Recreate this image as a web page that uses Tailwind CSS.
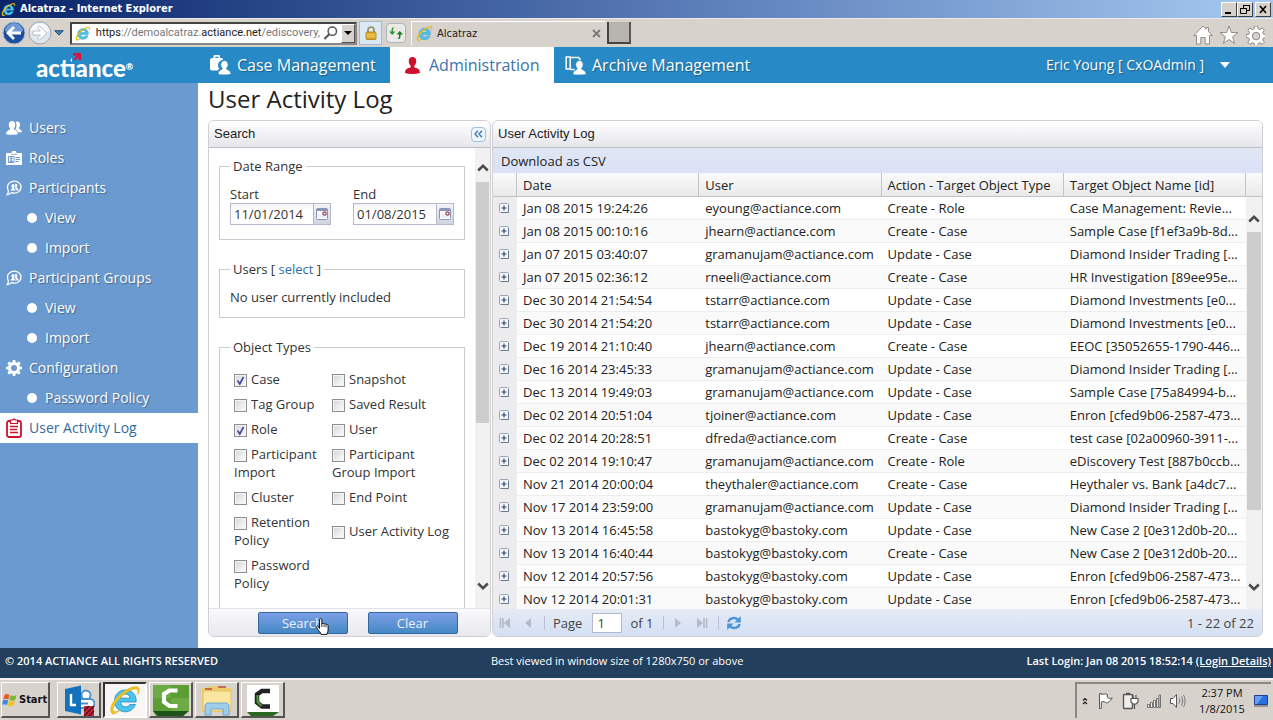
<!DOCTYPE html>
<html lang="en">
<head>
  <meta charset="UTF-8" />
  <meta name="viewport" content="width=device-width, initial-scale=1.0" />
  <title>Alcatraz - User Activity Log</title>
  <script src="https://cdn.jsdelivr.net/npm/@tailwindcss/browser@4"></script>
</head>
<body class="h-screen overflow-hidden flex flex-col bg-white text-[#333] text-[13px] leading-[18px] font-['Open_Sans',sans-serif]">

  <!-- shared icons -->
  <svg class="hidden">
    <symbol id="ie" viewBox="0 0 32 32">
      <path d="M27 18H11.500c.3 3 2.300 4.800 5 4.800 2 0 3.500-.8 4.400-2.300h5.500c-1.600 4.500-5.300 7.300-10 7.300C10 27.800 5.500 23.300 5.500 17S10 6 16.400 6 27.200 10.600 27.200 16.500zM11.600 14.200h9.500c-.3-2.500-2.200-4.200-4.700-4.200s-4.400 1.700-4.800 4.200z" fill="#4cc3ee" stroke="#1b8fc6" stroke-width=".8" />
      <path d="M3 29.500C-.5 26 3 17 11 10.500 18.500 4 27 1 29.500 3.500c1.500 1.700.5 4.500-.8 7 .6-3 .5-4.800-.7-5.300-3-1.200-9.500 2-15.500 7.300C6 18.500 2.800 25 4.600 27c1.200 1.200 4 .4 7-1-3.800 3-7 5-8.600 3.500z" fill="#f2c51d" stroke="#c99a10" stroke-width=".4" />
    </symbol>
    <symbol id="person" viewBox="0 0 16 18">
      <path d="M8 0c2.500 0 4 1.700 4 4.300 0 2-.8 3.900-2 4.900-.2 1.300.1 1.900 1 2.300 2.600.8 4.400 1.300 4.700 3.500l.2 2c-2.500 1-5 1-8 1s-5.400 0-7.900-1l.2-2c.3-2.200 2.200-2.700 4.800-3.500.9-.4 1.200-1 1-2.300-1.200-1-2-2.900-2-4.900C4 1.700 5.500 0 8 0z" />
    </symbol>
    <symbol id="bubble" viewBox="0 0 16 16">
      <path d="M8.300 1.200c3.900 0 6.700 2.500 6.700 5.900s-2.800 6-6.700 6c-1 0-2-.2-2.800-.5-1 1-2.500 1.800-4.300 2 .9-1 1.200-2.300 1.200-3.500C1.700 10 1.500 8.600 1.500 7.100c0-3.400 2.900-5.900 6.800-5.900z" fill="none" stroke="#fff" stroke-width="1.300" />
      <path d="M4.500 10.500c0-1.500 1-1.700 1.800-2.100.2-.4-.8-1-.8-2.500 0-1.200.7-1.900 1.600-1.900s1.500.7 1.500 1.900c0 1.300-.7 1.900-.6 2.500.8.400 1.700.6 1.700 2.100zM9 4c1.900-.8 2.700.7 2.400 2.100-.2 1-.7 1.400-.6 2 1 .4 1.800.7 1.800 2.300h-2.200c0-1.200-.6-1.800-1.500-2.300C9.400 6.800 9.500 5 9 4z" fill="#fff" />
    </symbol>
    <symbol id="gear" viewBox="0 0 16 16">
      <path fill-rule="evenodd" d="M6.800 0h2.400l.4 2.200 1.400.6L12.900 1.500l1.700 1.700-1.300 1.900.6 1.400 2.100.3v2.400l-2.200.4-.5 1.400 1.300 1.900-1.700 1.700-1.900-1.300-1.400.6L9.200 16H6.800l-.4-2.200-1.400-.5-1.900 1.300-1.700-1.700L2.700 11l-.6-1.400L0 9.200V6.800l2.200-.3.500-1.400-1.300-1.900 1.700-1.700L5 2.800l1.400-.6zM8 5a3 3 0 100 6 3 3 0 000-6z" />
    </symbol>
    <symbol id="calendar" viewBox="0 0 14 14">
      <rect x="1.500" y="1.500" width="11" height="11" rx="1" fill="#fff" stroke="#8a93b8" />
      <path d="M1.500 3h11" stroke="#8a93b8" stroke-width="2" />
      <path d="M3 10h8M3 8h3" stroke="#dde1ee" />
      <circle cx="9.500" cy="6.500" r="1.700" fill="#fff" stroke="#8c3a52" stroke-width="1.200" />
    </symbol>
    <symbol id="plus" viewBox="0 0 10 10">
      <rect x=".5" y=".5" width="9" height="9" rx="1" fill="#f4f6fa" stroke="#9aa4b4" />
      <path d="M9.500 2v7.500H2" fill="none" stroke="#68788f" />
      <path d="M5 2.500v5M2.500 5h5" stroke="#2c4670" stroke-width="1.200" />
    </symbol>
    <symbol id="chev" viewBox="0 0 12 8">
      <path d="M1.200 6.500L6 1.800l4.800 4.700" fill="none" stroke="#4a4a4a" stroke-width="2.500" />
    </symbol>
  </svg>

  <!-- window title bar -->
  <div class="h-[18px] shrink-0 flex items-center gap-1 pl-px pr-0.5 bg-linear-to-r from-[#0a246a] via-[#6486c0] via-60% to-[#a6caf0] text-white">
    <svg class="size-[15px]"><use href="#ie" /></svg>
    <span class="flex-1 font-bold text-[11px] font-['DejaVu_Sans_Condensed','DejaVu_Sans',sans-serif]">Alcatraz - Internet Explorer</span>
    <button aria-label="Minimize" class="w-4 h-[15px] bg-[#d6d1cb] border border-t-white border-l-white border-r-[#404040] border-b-[#404040]">
      <svg viewBox="0 0 14 13" class="size-full"><path d="M3 10h6" stroke="#000" stroke-width="2" /></svg>
    </button>
    <button aria-label="Restore" class="-ml-1 w-4 h-[15px] bg-[#d6d1cb] border border-t-white border-l-white border-r-[#404040] border-b-[#404040]">
      <svg viewBox="0 0 14 13" class="size-full"><path d="M5.500 5V2.500h6v5H9M5 2.500h7M2.500 5.500h6v5h-6zM2 5.500h7" fill="none" stroke="#000" /></svg>
    </button>
    <button aria-label="Close" class="-ml-0.5 w-4 h-[15px] bg-[#d6d1cb] border border-t-white border-l-white border-r-[#404040] border-b-[#404040]">
      <svg viewBox="0 0 14 13" class="size-full"><path d="M4 3l6 7M10 3l-6 7" stroke="#000" stroke-width="1.600" /></svg>
    </button>
  </div>

  <!-- browser toolbar -->
  <div class="h-[29px] shrink-0 flex items-center bg-[#d8d2cc] border-t border-[#eeeae6] pl-0.5 pr-2 text-[#222] text-[11px]">
    <button aria-label="Back" class="size-6">
      <svg viewBox="0 0 24 24"><circle cx="12" cy="12" r="11" fill="#1d4f9f" stroke="#aebdd2" /><path d="M3 10a9 8 0 0118 0c-5 3-13 3-18 0z" fill="#6f9ad6" /><path d="M12 6l-6 6 6 6M6.500 12H19" fill="none" stroke="#fff" stroke-width="2.800" /></svg>
    </button>
    <button aria-label="Forward" class="ml-0.5 size-6">
      <svg viewBox="0 0 24 24"><circle cx="12" cy="12" r="11" fill="#dfe5ec" stroke="#9aa5b3" /><path d="M3 10a9 8 0 0118 0c-5 3-13 3-18 0z" fill="#f6f8fa" /><path d="M5 10h7.500L9.500 7l2-2 7.500 7-7.500 7-2-2 3-3H5z" fill="#fff" stroke="#b0b8c4" stroke-width=".9" /></svg>
    </button>
    <button aria-label="Recent pages" class="ml-0.5 w-[10px]"><svg viewBox="0 0 10 6"><path d="M.7.700h8.600L5 5.200z" fill="#3a86b4" stroke="#27506f" /></svg></button>
    <div class="ml-[6px] w-[287px] h-[23px] flex items-center bg-white border-2 border-[#444] border-r-[#888] border-b-[#888] pl-[3px]">
      <svg class="size-[17px]"><use href="#ie" /></svg>
      <div class="ml-[5px] flex-1 whitespace-nowrap text-[#777] text-[11px] font-['Roboto',sans-serif]"><span class="text-[#222]">https</span>://demoalcatraz.<span class="text-[#222]">actiance.net</span>/ediscovery,</div>
      <svg viewBox="0 0 16 16" class="size-4 mx-[3px]"><circle cx="10" cy="6" r="4.500" fill="none" stroke="#555" stroke-width="1.600" /><path d="M6.700 9.300L1.500 14.500" stroke="#555" stroke-width="2.200" /></svg>
      <button aria-label="Show addresses" class="w-[15px] h-[19px] bg-[#d8d2cc] border border-t-white border-l-white border-r-[#555] border-b-[#555] flex items-center justify-center"><svg viewBox="0 0 8 4" class="w-2"><path d="M0 0h8L4 4z" /></svg></button>
    </div>
    <button aria-label="Security report" class="ml-0.5 w-[23px] h-6 bg-[#dbe8f6] border border-[#aab9cc] flex items-center justify-center">
      <svg viewBox="0 0 12 14" class="w-3"><path d="M3 7V4a3 3 0 016 0v3" fill="none" stroke="#9b8a55" stroke-width="1.700" /><rect x="1" y="6" width="10" height="7.500" rx="1" fill="#e0ab2b" stroke="#a87d14" stroke-width=".8" /><path d="M1.500 8.500h9M1.500 10.500h9" stroke="#f3d16e" stroke-width=".8" /></svg>
    </button>
    <button aria-label="Refresh" class="ml-1 w-5 h-5 bg-[#eceae6] border border-[#a9b5bd] rounded-sm flex items-center justify-center">
      <svg viewBox="0 0 16 14" class="w-4"><path d="M4.700 1.500C3.600 2.500 3.300 4 3.500 5.500H1L4.200 9l3.300-3.500H5C4.800 4 5.200 2.500 6.200 1.500z" fill="#2f9a32" /><path d="M11.300 13c1.100-1 1.400-2.500 1.200-4.500H15L11.800 5 8.500 8.500H11c.2 2-.2 3.500-1.500 4.500z" fill="#1f7a24" /></svg>
    </button>
    <div class="ml-[5px] w-[194px] h-6 flex items-center border-l border-t border-white pl-1">
      <svg class="size-[17px]"><use href="#ie" /></svg>
      <span class="ml-1 flex-1 text-[11px] font-['DejaVu_Sans_Condensed','DejaVu_Sans',sans-serif]">Alcatraz</span>
      <button aria-label="Close tab" class="mr-1"><svg viewBox="0 0 9 9" class="size-[9px]"><path d="M1 1l7 7M8 1L1 8" stroke="#777" stroke-width="1.800" /></svg></button>
    </div>
    <button aria-label="New tab" class="ml-0.5 w-6 h-[22px] bg-[#b8b4b0] border-2 border-t-0 border-[#444] border-r-[#555]"></button>
    <div class="flex-1"></div>
    <div class="flex gap-[6px] items-center pt-1">
      <button aria-label="Home" class="size-5"><svg viewBox="0 0 20 20"><path d="M10 1L.8 10.500h2.700V19h4.300v-6.500h4.400V19h4.300v-8.500h2.700L15.500 6.500V2.500h-2.300v1.800z" fill="#fff" stroke="#8a8580" stroke-width=".9" /></svg></button>
      <button aria-label="Favorites" class="size-5"><svg viewBox="0 0 20 20"><path d="M10 1l2.300 6.500H19l-5.400 4.200 2 6.800L10 14.500l-5.600 4 2-6.800L1 7.500h6.700z" fill="#fff" stroke="#8a8580" stroke-width=".9" /></svg></button>
      <button aria-label="Tools" class="size-5"><svg viewBox="-1 -1 18 18" fill="#fff" stroke="#8a8580" stroke-width=".8"><use href="#gear" /></svg></button>
    </div>
  </div>

  <!-- application header -->
  <header class="h-9 shrink-0 flex bg-[#2789c6] text-white">
    <div class="w-[198px] pl-9 flex items-center">
      <div class="relative text-[24px] leading-[30px] font-black font-['Lato',sans-serif] mt-1">actiance<span class="text-[9px] align-[7px]">®</span>
        <svg viewBox="0 0 10 12" class="absolute left-[36px] top-0 w-[10px] h-3"><path d="M0 1h10v11H0z" fill="#2789c6" /><path d="M1 1h8v7H6.500V5L3 8.500 1.500 7 5 3.500H1z" fill="#d8143a" /></svg>
      </div>
    </div>
    <nav class="flex text-[16px] leading-6 [text-shadow:1px_1px_1px_rgba(0,0,0,0.35)]">
      <a href="#cases" class="flex items-center gap-[6px] pl-3 w-48">
        <svg viewBox="0 0 21 20" class="w-[21px] h-5" fill="#fff"><path fill-rule="evenodd" d="M3.500 3V1.500C3.500.500 4 0 5 0h3.500c1 0 1.500.5 1.500 1.500V3h1.500c.8 0 1.300.5 1.300 1.200V5C9.500 5.500 8 7.500 8 10c0 1.600.5 3 1.500 4-1 .4-1.700.8-2.300 1.500H2c-1.200 0-2-.8-2-2V5c0-1.200.8-2 2-2zm1.800 0h3V1.700h-3z" /><path d="M14.500 5.500c2.300 0 3.700 1.700 3.700 4 0 1.700-.8 3-1.700 4 .1 1.500 4.200 1.500 4.500 4.500v1.500c-2 .5-4 .5-6.500.5s-5 0-6.500-.5V18c.3-3 4.200-3 4.300-4.500-1-1-1.600-2.300-1.600-4 0-2.300 1.500-4 3.800-4z" stroke="#2789c6" /></svg>
        Case Management
      </a>
      <a href="#admin" class="flex items-center gap-[9px] pl-[15px] w-[164px] bg-white text-[#3b73ad] [text-shadow:none]">
        <svg class="w-[15px] h-[17px] fill-[#cf1130]"><use href="#person" /></svg>
        Administration
      </a>
      <a href="#archive" class="flex items-center gap-[6px] pl-[11px]">
        <svg viewBox="0 0 21 20" class="w-[21px] h-5" fill="#fff"><path d="M1.200 2h4v12h-4z" fill="none" stroke="#fff" stroke-width="1.500" /><path d="M5.500 2.500h8l1.500 1.500v2M5.500 14.500h4" fill="none" stroke="#fff" stroke-width="1.500" /><path d="M14.500 5.500c2.300 0 3.700 1.700 3.700 4 0 1.700-.8 3-1.700 4 .1 1.500 4.200 1.500 4.500 4.500v1.500c-2 .5-4 .5-6.500.5s-5 0-6.500-.5V18c.3-3 4.200-3 4.300-4.500-1-1-1.600-2.300-1.600-4 0-2.300 1.500-4 3.800-4z" stroke="#2789c6" stroke-width=".8" /></svg>
        Archive Management
      </a>
    </nav>
    <button class="ml-auto mr-[43px] flex items-center gap-4 text-[14px] [text-shadow:1px_1px_1px_rgba(0,0,0,0.35)]">
      Eric Young [ CxOAdmin ]
      <svg viewBox="0 0 10 6" class="w-[10px]"><path d="M0 0h10L5 6z" fill="#fff" /></svg>
    </button>
  </header>

  <div class="flex-1 min-h-0 flex">
    <!-- side menu -->
    <nav class="w-[198px] shrink-0 pt-[30px] bg-[#6a9acf] text-white text-[14px] [&>a]:h-[30px] [&>a]:flex [&>a]:items-center [text-shadow:1px_1px_1px_rgba(0,0,0,0.35)]">
      <a href="#users" class="gap-[7px] pl-[6px]">
        <svg viewBox="0 0 16 16" class="size-4" fill="#fff"><path d="M9.500 2c3-1.500 4.800.4 4.500 3-.1 1.300-.7 2.400-1.200 3.200.2 1 2.900 1 3.200 4H12c-.5-1.500-1.500-2-2.800-2.600 1.500-1.800 2-5 .3-7.600z" /><path d="M6 1c2 0 3.200 1.500 3.200 3.700 0 1.700-.6 3-1.500 4C8 10.300 11.500 10 12 14c-2 .8-4 .8-6 .8s-4 0-6-.8c.5-4 4-3.700 4.300-5.300-.9-1-1.500-2.300-1.500-4C2.800 2.500 4 1 6 1z" /></svg>
        Users
      </a>
      <a href="#roles" class="gap-[7px] pl-[6px]">
        <svg viewBox="0 0 16 16" class="size-4"><path d="M0 3h5.500l.5-2h4l.5 2H16v12H0z" fill="#fff" /><path d="M5 4.300h6" stroke="#6a9acf" stroke-width=".8" /><path d="M2.500 6.500H8v6H2.500zM9.500 7.500h4.500M9.500 9.500h4.500M9.500 11.500h3" fill="none" stroke="#6a9acf" /><circle cx="5.200" cy="8.500" r="1.200" fill="#6a9acf" /><path d="M3.500 12c0-2.500 3.500-2.500 3.500 0z" fill="#6a9acf" /></svg>
        Roles
      </a>
      <a href="#participants" class="gap-[7px] pl-[6px]"><svg class="size-4"><use href="#bubble" /></svg>Participants</a>
      <a href="#participants-view" class="gap-2 pl-[27px]"><i class="size-[10px] rounded-full bg-white"></i>View</a>
      <a href="#participants-import" class="gap-2 pl-[27px]"><i class="size-[10px] rounded-full bg-white"></i>Import</a>
      <a href="#groups" class="gap-[7px] pl-[6px]"><svg class="size-4"><use href="#bubble" /></svg>Participant Groups</a>
      <a href="#groups-view" class="gap-2 pl-[27px]"><i class="size-[10px] rounded-full bg-white"></i>View</a>
      <a href="#groups-import" class="gap-2 pl-[27px]"><i class="size-[10px] rounded-full bg-white"></i>Import</a>
      <a href="#configuration" class="gap-[7px] pl-[6px]"><svg class="size-4 fill-white"><use href="#gear" /></svg>Configuration</a>
      <a href="#password-policy" class="gap-2 pl-[27px]"><i class="size-[10px] rounded-full bg-white"></i>Password Policy</a>
      <a href="#activity" class="gap-[7px] pl-[6px] bg-white text-[#34699c] [text-shadow:none]">
        <svg viewBox="0 0 16 20" class="w-4 h-5"><rect x="1" y="3" width="14" height="16" rx="2" fill="#fff" stroke="#cf1130" stroke-width="1.800" /><path d="M4.500 2h2c.3-1.300 2.700-1.300 3 0h2v3.500h-7z" fill="#fff" stroke="#cf1130" stroke-width="1.200" /><path d="M4 8.500h8M4 11.500h7M4 14.500h8" stroke="#cf1130" stroke-width="1.500" /></svg>
        User Activity Log
      </a>
    </nav>

    <main class="flex-1 min-w-0 flex flex-col px-[10px] pb-[11px]">
      <h1 class="h-[37px] shrink-0 text-[24px] leading-8 text-[#222]">User Activity Log</h1>
      <div class="flex-1 min-h-0 flex gap-px">

        <!-- search form -->
        <form class="w-[283px] shrink-0 flex flex-col border border-[#cfcfd4] rounded-md overflow-hidden">
          <div class="h-[27px] shrink-0 flex items-center justify-between pl-[5px] pr-1 bg-linear-to-b from-white to-[#e6e6eb] border-b border-[#bcbcc2] text-[#222] font-['Liberation_Sans',sans-serif]">
            Search
            <button type="button" aria-label="Collapse" class="size-[15px] border border-[#9fc0e2] rounded-sm bg-[#eef5fc] flex items-center justify-center">
              <svg viewBox="0 0 9 8" class="w-[9px]"><path d="M4 .8L1 4l3 3.200M8 .8L5 4l3 3.200" fill="none" stroke="#2f74bd" stroke-width="1.300" /></svg>
            </button>
          </div>
          <div class="flex-1 min-h-0 flex">
            <div class="flex-1 min-w-0 overflow-hidden pt-[9px] px-[10px]">
              <fieldset class="border border-[#ccc] px-[10px] pb-[14px]">
                <legend class="px-[3px]">Date Range</legend>
                <div class="flex gap-[22px] pt-[10px]">
                  <div class="w-[101px]">
                    <label for="start" class="block">Start</label>
                    <div class="flex h-[22px]">
                      <input id="start" value="11/01/2014" class="w-[84px] border border-[#b5b8c8] px-[3px] bg-linear-to-b from-[#f2f2f2] to-white to-30%" />
                      <button type="button" aria-label="Pick start date" class="flex-1 border border-l-0 border-[#b5b8c8] bg-linear-to-b from-[#f2f4f8] to-[#cfd4e0] flex items-center justify-center"><svg class="size-[14px]"><use href="#calendar" /></svg></button>
                    </div>
                  </div>
                  <div class="w-[101px]">
                    <label for="end" class="block">End</label>
                    <div class="flex h-[22px]">
                      <input id="end" value="01/08/2015" class="w-[84px] border border-[#b5b8c8] px-[3px] bg-linear-to-b from-[#f2f2f2] to-white to-30%" />
                      <button type="button" aria-label="Pick end date" class="flex-1 border border-l-0 border-[#b5b8c8] bg-linear-to-b from-[#f2f4f8] to-[#cfd4e0] flex items-center justify-center"><svg class="size-[14px]"><use href="#calendar" /></svg></button>
                    </div>
                  </div>
                </div>
              </fieldset>
              <fieldset class="mt-5 border border-[#ccc] px-[10px] pb-[11px]">
                <legend class="px-[3px]">Users [ <a href="#select" class="text-[#2f6ea8]">select</a> ]</legend>
                <p class="pt-[10px]">No user currently included</p>
              </fieldset>
              <fieldset class="mt-5 min-w-0 border border-[#ccc] px-[10px] h-[320px]">
                <legend class="px-[3px]">Object Types</legend>
                <div id="types" class="grid grid-cols-[84px_1fr] gap-x-[14px] gap-y-[7px] items-center pl-1 pt-[14px]"></div>
              </fieldset>
            </div>
            <div class="w-[15px] bg-[#f1f1f1] flex flex-col items-center pt-4 pb-[18px]">
              <svg class="w-3 h-2 shrink-0"><use href="#chev" /></svg>
              <div class="mt-[10px] w-[13px] h-[241px] bg-[#cdcdcd]"></div>
              <svg class="mt-auto w-3 h-2 shrink-0 rotate-180"><use href="#chev" /></svg>
            </div>
          </div>
          <div class="relative h-[28px] shrink-0 flex items-center justify-center gap-5 pl-4 border-t border-[#e2e2e6] bg-linear-to-b from-[#fafafc] to-[#e8e8ee]">
            <button type="button" class="w-[90px] h-[22px] rounded-xs border border-[#31689f] bg-linear-to-b from-[#7c9ee8] to-[#4289c4] text-[#eaf3ff]">Search</button>
            <button type="button" class="w-[90px] h-[22px] rounded-xs border border-[#31689f] bg-linear-to-b from-[#7c9ee8] to-[#4289c4] text-[#eaf3ff]">Clear</button>
            <!-- hand pointer -->
            <svg viewBox="0 0 13 17" class="absolute left-[107px] top-[9px] w-[13px] h-[17px]"><path d="M3.500 10.500V1.800c0-1.700 2.300-1.700 2.300 0V6c.3-1 2.100-.9 2.200.2.400-.8 2-.6 2.100.5.400-.7 2-.5 2 .9V12c0 2-1.100 2.600-1.100 4.400H5C5 14.500 1.500 12 .7 9.500c-.4-1.500 1-1.800 1.700-.8z" fill="#fff" stroke="#000" stroke-width=".9" /><path d="M5.800 6v3M8 6.500V9M10 7v2.200" stroke="#000" stroke-width=".8" /></svg>
          </div>
        </form>

        <!-- activity grid -->
        <section class="flex-1 min-w-0 flex flex-col border border-[#cfcfd4] rounded-md overflow-hidden text-[#222]">
          <div class="h-[27px] shrink-0 flex items-center pl-[5px] bg-linear-to-b from-white to-[#e6e6eb] border-b border-[#bcbcc2] font-['Liberation_Sans',sans-serif]">User Activity Log</div>
          <div class="h-[25px] shrink-0 flex items-center pl-2 bg-linear-to-b from-[#dfe8f3] to-[#dbe0f8]"><button>Download as CSV</button></div>
          <div class="flex-1 min-h-0 flex overflow-hidden">
            <div class="flex-1 min-w-0 overflow-hidden">
              <table class="w-full table-fixed border-separate border-spacing-0">
                <thead>
                  <tr class="h-6 bg-linear-to-b from-[#fbfbfb] to-[#e9e9ea] text-left [&>th]:font-normal [&>th]:border-r [&>th]:border-b [&>th]:border-[#c4c4c8]">
                    <th class="w-6"></th>
                    <th class="pl-[6px]">Date</th>
                    <th class="pl-[6px]">User</th>
                    <th class="pl-[6px] whitespace-nowrap">Action - Target Object Type</th>
                    <th class="pl-[6px] whitespace-nowrap">Target Object Name [id]</th>
                  </tr>
                </thead>
                <tbody id="rows"></tbody>
              </table>
            </div>
            <div class="w-4 flex flex-col">
              <div class="h-6 shrink-0 bg-linear-to-b from-[#fbfbfb] to-[#e9e9ea] border-b border-[#c4c4c8]"></div>
              <div class="flex-1 flex flex-col items-center bg-[#f1f1f1] pt-[18px] pb-[18px]">
                <svg class="w-3 h-2 shrink-0"><use href="#chev" /></svg>
                <div class="mt-[9px] w-[14px] h-[278px] bg-[#cdcdcd]"></div>
                <svg class="mt-auto w-3 h-2 shrink-0 rotate-180"><use href="#chev" /></svg>
              </div>
            </div>
          </div>
          <div class="h-[27px] shrink-0 flex items-center pl-[6px] pr-2 bg-linear-to-b from-[#e6eaf6] to-[#d3e0f2] text-[#444]">
            <button aria-label="First page"><svg viewBox="0 0 12 12" class="w-3"><path d="M1.500 1v10M4 1v10" stroke="#b4bac6" stroke-width="1.600" /><path d="M11 1v10L5 6z" fill="#b4bac6" /></svg></button>
            <button aria-label="Previous page" class="ml-[13px]"><svg viewBox="0 0 8 12" class="w-2"><path d="M7 1v10L1 6z" fill="#b4bac6" /></svg></button>
            <i class="ml-3 h-[14px] border-l border-[#b9c2d4]"></i>
            <label for="page" class="ml-2">Page</label>
            <input id="page" value="1" class="ml-[10px] w-[30px] h-5 border border-[#b5b8c8] bg-white px-1" />
            <span class="ml-2">of 1</span>
            <i class="ml-[10px] h-[14px] border-l border-[#b9c2d4]"></i>
            <button aria-label="Next page" class="ml-[10px]"><svg viewBox="0 0 8 12" class="w-2"><path d="M1 1v10l6-5z" fill="#b4bac6" /></svg></button>
            <button aria-label="Last page" class="ml-[14px]"><svg viewBox="0 0 12 12" class="w-3"><path d="M10.500 1v10M8 1v10" stroke="#b4bac6" stroke-width="1.600" /><path d="M1 1v10l6-5z" fill="#b4bac6" /></svg></button>
            <i class="ml-[10px] h-[14px] border-l border-[#b9c2d4]"></i>
            <button aria-label="Refresh" class="ml-[7px]"><svg viewBox="0 0 16 16" class="size-4"><path d="M2.500 7C3 3.500 8 1.500 12 4.500M13.500 9C13 12.500 8 14.500 4 11.500" fill="none" stroke="#4a93d8" stroke-width="2.400" /><path d="M14.800 1v6.500H8.500zM1.200 15V8.500h6.300z" fill="#4a93d8" /></svg></button>
            <span class="ml-auto">1 - 22 of 22</span>
          </div>
        </section>
      </div>
    </main>
  </div>

  <footer class="h-[30px] shrink-0 grid grid-cols-3 items-center bg-[#223f5e] text-white text-[11px] pl-[5px] pr-0.5 pb-1">
    <span class="font-semibold">© 2014 ACTIANCE ALL RIGHTS RESERVED</span>
    <span class="pl-16">Best viewed in window size of 1280x750 or above</span>
    <span class="font-semibold text-right">Last Login: Jan 08 2015 18:52:14 <a href="#logins" class="underline">(Login Details)</a></span>
  </footer>

  <!-- taskbar -->
  <div class="h-[42px] shrink-0 flex items-center bg-[#d8d2cd] border-t-2 border-[#f2efec] pl-px pr-[2px] text-[#111]">
    <button class="w-[49px] h-9 flex items-center gap-px border border-t-white border-l-white border-r-2 border-b-2 border-r-[#555] border-b-[#555] text-[11px] font-bold font-['DejaVu_Sans_Condensed','DejaVu_Sans',sans-serif]">
      <svg viewBox="0 0 16 16" class="size-4 shrink-0"><path d="M2.500 3C4 1.800 5.500 1.800 7.500 3L6.300 7.500C4.500 6.500 3 6.500 1.200 7.500z" fill="#e8592b" /><path d="M8.500 3.300c2 1 3.700 1 6-.3L13.200 8c-2 1-4 1-6-.2z" fill="#7bb83a" /><path d="M1 8.500c2-1 3.500-1 5.200 0L5 13c-2-1-3.300-1-5 0z" fill="#3d86d8" /><path d="M7 8.800c2 1 3.800 1 6 .2l-1.300 4.500c-2 1-4 1-6-.2z" fill="#f4c127" /></svg>
      Start
    </button>
    <div class="ml-[7px] flex gap-[2px] [&>button]:w-11 [&>button]:h-9 [&>button]:flex [&>button]:items-center [&>button]:justify-center [&>button]:border [&>button]:border-t-white [&>button]:border-l-white [&>button]:border-r-2 [&>button]:border-b-2 [&>button]:border-r-[#555] [&>button]:border-b-[#555]">
      <button aria-label="Lync">
        <svg viewBox="0 0 32 32" class="size-8"><circle cx="23" cy="11" r="4.500" fill="#fff" stroke="#4a8fcb" stroke-width="1.800" /><path d="M17 15h10a4.500 4.500 0 010 9H17z" fill="#fff" stroke="#4a8fcb" stroke-width="1.800" /><path d="M18 19.500h7" stroke="#4a8fcb" stroke-width="2" /><path d="M2 5l16-3.500v29L2 27z" fill="#1372be" /><path d="M8 10v11h5" fill="none" stroke="#fff" stroke-width="2.400" /><path d="M21 22h10v10H21z" fill="#c3263b" /><path d="M21 27l5-5M21 32l10-10M26 32l5-5" stroke="#4f0b16" stroke-width="1.300" /></svg>
      </button>
      <button aria-label="Internet Explorer" class="bg-[#f7f6f5] !border-t-2 !border-l-2 !border-t-[#333] !border-l-[#333] !border-r-white !border-b-white"><svg class="size-8"><use href="#ie" /></svg></button>
      <button aria-label="Camtasia Studio"><svg viewBox="0 0 38 34" class="w-[38px] h-[34px]"><path d="M1 2h36v26l-6 5H4l-3-5z" fill="#5a9e34" /><path d="M1 2h18v13H1zM19 15h18v13H19z" fill="#6cab46" /><path d="M1 28h36l-6 5H6z" fill="#20531a" /><path d="M25.500 7.500h-8L12 11v8l5.500 4h8" fill="none" stroke="#fff" stroke-width="4.200" /></svg></button>
      <button aria-label="File Explorer"><svg viewBox="0 0 34 32" class="w-[34px] h-8"><path d="M2 4h6l2-2h6l2 2h13v24H2z" fill="#eccc6c" /><path d="M5 5h7M18 3h8" stroke="#b94c37" stroke-width="1.500" /><path d="M3 7h28v20H3z" fill="#f8e6a1" stroke="#e2c366" /><path d="M5 31V21l2-2h20l2 2v10h-6v-6H11v6z" fill="#9dcdeb" stroke="#5f9fcb" stroke-width=".8" /></svg></button>
      <button aria-label="Camtasia Recorder"><svg viewBox="0 0 34 34" class="size-[34px]"><path d="M1 2h32v27H1z" fill="#fff" /><path d="M1 29h32l-6 4H5z" fill="#2a6a20" /><path d="M24 8h-8l-5 3.500v8l5 4h8" fill="none" stroke="#222" stroke-width="4.500" /><path d="M11.500 12v7l4 4" fill="none" stroke="#48a233" stroke-width="2" /></svg></button>
    </div>
    <div class="ml-auto h-9 flex items-center border-t-2 border-l-2 border-[#8d8782] pl-[5px]">
      <svg viewBox="0 0 6 8" class="w-[6px]"><path d="M1 3.500l2-2 2 2M1 7l2-2 2 2" fill="none" stroke="#111" stroke-width="1.100" /></svg>
      <svg viewBox="0 0 16 18" class="ml-[10px] w-4"><path d="M1.500 1.500v15h1.800V10c2-1 4 0 5 1 2-.5 4-2 6-5-2 .5-4 .5-5-.5V2.500c-2-1-4-.5-6 0v-1z" fill="#fff" stroke="#555" /></svg>
      <svg viewBox="0 0 17 18" class="ml-2 w-[17px]"><rect x="1.500" y="2.500" width="9" height="14" rx="1" fill="#eee" stroke="#555" stroke-width="1.400" /><path d="M4 1.500h4" stroke="#555" stroke-width="1.500" /><path d="M9 6.500h7V10l-2 2h-3l-2-2zM11 6V3M14 6V3M12.500 12v5" fill="#fff" stroke="#555" stroke-width="1.200" /></svg>
      <svg viewBox="0 0 14 14" class="ml-2 w-[14px]"><path d="M.5 13.500v-3h2v3zM3.500 13.500v-5h2v5zM6.500 13.500v-7h2v7zM9.500 13.500v-9h1.800v9zM12 13.500V1h1.500v12.500z" fill="#f4f4f4" stroke="#666" stroke-width=".9" /></svg>
      <svg viewBox="0 0 17 16" class="ml-2 w-[17px]"><path d="M1.500 5.500H4L7.500 1.500v13L4 10.500H1.500z" fill="#fff" stroke="#555" /><path d="M10 5.500c1 1.500 1 3.500 0 5M12.300 3.500c1.800 2.500 1.800 6.500 0 9M14.500 2c2 3.500 2 8.500 0 12" fill="none" stroke="#777" /></svg>
      <div class="ml-3 w-12 text-center text-[11px] leading-4">2:37 PM<br />1/8/2015</div>
      <svg viewBox="0 0 14 12" class="ml-2 mr-[3px] w-[14px]"><path d="M.5.500h13v9H.5z" fill="#2e6fe0" stroke="#1c3f94" /><path d="M1 1h8L3 9H1z" fill="#6ba0f0" /><path d="M0 11h14" stroke="#555" /></svg>
    </div>
  </div>

  <script>
    const types = [
      ['Case', true], ['Snapshot', false],
      ['Tag Group', false], ['Saved Result', false],
      ['Role', true], ['User', false],
      ['Participant Import', false], ['Participant Group Import', false],
      ['Cluster', false], ['End Point', false],
      ['Retention Policy', false], ['User Activity Log', false],
      ['Password Policy', false]
    ];

    const rows = [
      ['Jan 08 2015 19:24:26', 'eyoung@actiance.com', 'Create - Role', 'Case Management: Revie...'],
      ['Jan 08 2015 00:10:16', 'jhearn@actiance.com', 'Create - Case', 'Sample Case [f1ef3a9b-8d...'],
      ['Jan 07 2015 03:40:07', 'gramanujam@actiance.com', 'Update - Case', 'Diamond Insider Trading [...'],
      ['Jan 07 2015 02:36:12', 'rneeli@actiance.com', 'Create - Case', 'HR Investigation [89ee95e...'],
      ['Dec 30 2014 21:54:54', 'tstarr@actiance.com', 'Update - Case', 'Diamond Investments [e0...'],
      ['Dec 30 2014 21:54:20', 'tstarr@actiance.com', 'Update - Case', 'Diamond Investments [e0...'],
      ['Dec 19 2014 21:10:40', 'jhearn@actiance.com', 'Create - Case', 'EEOC [35052655-1790-446...'],
      ['Dec 16 2014 23:45:33', 'gramanujam@actiance.com', 'Update - Case', 'Diamond Insider Trading [...'],
      ['Dec 13 2014 19:49:03', 'gramanujam@actiance.com', 'Update - Case', 'Sample Case [75a84994-b...'],
      ['Dec 02 2014 20:51:04', 'tjoiner@actiance.com', 'Update - Case', 'Enron [cfed9b06-2587-473...'],
      ['Dec 02 2014 20:28:51', 'dfreda@actiance.com', 'Create - Case', 'test case [02a00960-3911-...'],
      ['Dec 02 2014 19:10:47', 'gramanujam@actiance.com', 'Create - Role', 'eDiscovery Test [887b0ccb...'],
      ['Nov 21 2014 20:00:04', 'theythaler@actiance.com', 'Create - Case', 'Heythaler vs. Bank [a4dc7...'],
      ['Nov 17 2014 23:59:00', 'gramanujam@actiance.com', 'Update - Case', 'Diamond Insider Trading [...'],
      ['Nov 13 2014 16:45:58', 'bastokyg@bastoky.com', 'Update - Case', 'New Case 2 [0e312d0b-20...'],
      ['Nov 13 2014 16:40:44', 'bastokyg@bastoky.com', 'Create - Case', 'New Case 2 [0e312d0b-20...'],
      ['Nov 12 2014 20:57:56', 'bastokyg@bastoky.com', 'Update - Case', 'Enron [cfed9b06-2587-473...'],
      ['Nov 12 2014 20:01:31', 'bastokyg@bastoky.com', 'Update - Case', 'Enron [cfed9b06-2587-473...']
    ];

    document.getElementById('types').innerHTML = types.map(([name, on]) => `
      <label class="block"><span class="relative inline-block size-[13px] align-[-3px] mr-1"><input type="checkbox" ${on ? 'checked' : ''} class="peer block appearance-none size-[13px] border border-[#8e8f8f] bg-linear-to-br from-[#d5d5d8] to-white shadow-[inset_0_0_0_1px_#f4f4f4]" /><svg viewBox="0 0 13 13" class="hidden peer-checked:block absolute inset-0 size-[13px] pointer-events-none"><path d="M3.500 6.500l2.300 3.500L9.500 3" fill="none" stroke="#4b4a9c" stroke-width="1.700" /></svg></span>${name}</label>`).join('');

    document.getElementById('rows').innerHTML = rows.map(r => `
      <tr class="h-[23px] even:bg-[#fafafa] [&>td]:border-b [&>td]:border-[#ededed] [&>td]:pl-[6px] [&>td]:whitespace-nowrap [&>td]:overflow-hidden">
        <td class="bg-[#ececee] border-r border-r-[#e0e0e0]"><button aria-label="Expand row" class="block size-[10px]"><svg class="size-[10px]"><use href="#plus" /></svg></button></td>
        ${r.map(c => `<td>${c}</td>`).join('')}
      </tr>`).join('');
  </script>
</body>
</html>
